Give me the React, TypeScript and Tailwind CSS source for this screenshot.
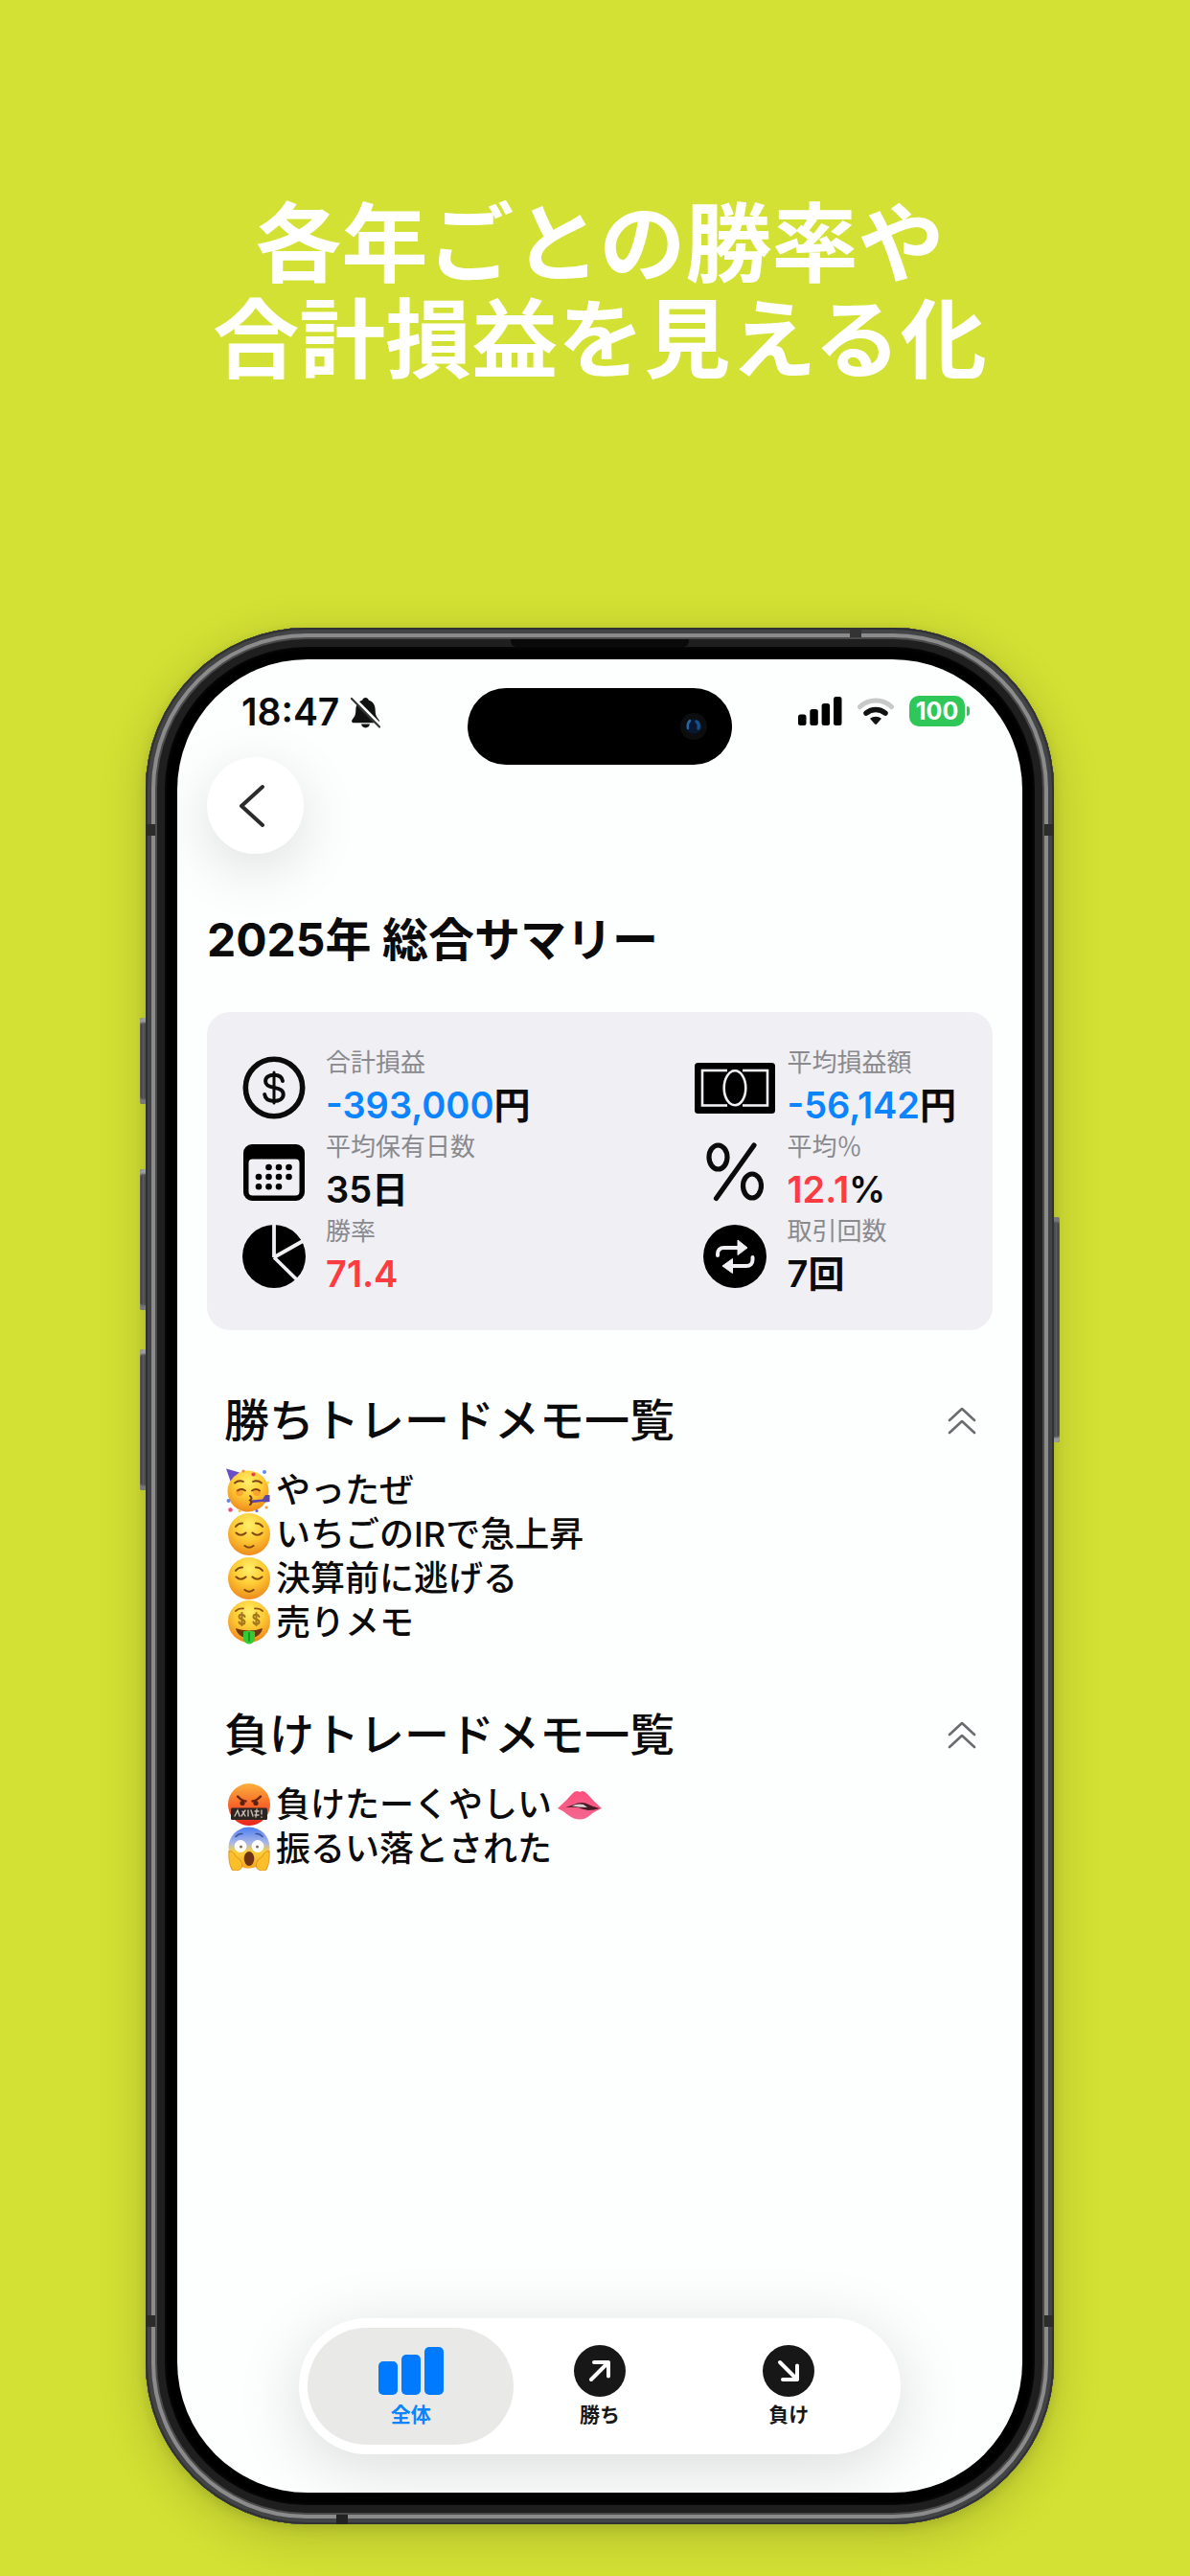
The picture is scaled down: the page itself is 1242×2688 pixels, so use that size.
import type { ReactNode } from "react";

function BellOff() {
  return (
    <svg width="31" height="33" viewBox="0 0 32 34" aria-label="消音" role="img">
      <path d="M16 1c1.700 0 3 1 3.300 2.500C24 5 26.500 9 26.500 14c0 6 1.500 8 4 11 .8 1.300.2 3-1.500 3H3c-1.700 0-2.300-1.700-1.500-3 2.500-3 4-5 4-11 0-5 2.500-9 7.200-10.500C13 2 14.300 1 16 1Z" fill="#111" />
      <path d="M11.500 29.500h9a4.500 4 0 0 1-9 0Z" fill="#111" />
      <path d="M2.500 1.500 32 31.500" stroke="#fdfefe" strokeWidth="4.600" />
      <path d="M1 2 31 32.500" stroke="#333" strokeWidth="2.200" strokeLinecap="round" />
    </svg>
  );
}

function Signal() {
  return (
    <svg width="46" height="30" viewBox="0 0 46 30" aria-label="電波強度" role="img">
      <rect x="0" y="18.500" width="8.500" height="11.500" rx="2.500" />
      <rect x="12.300" y="13" width="8.500" height="17" rx="2.500" />
      <rect x="24.600" y="7" width="8.500" height="23" rx="2.500" />
      <rect x="37" y="0" width="8.500" height="30" rx="2.500" />
    </svg>
  );
}

function Wifi() {
  return (
    <svg width="38" height="29" viewBox="0 0 38 29" fill="none" aria-label="Wi-Fi" role="img">
      <path d="M2.500 9.500a24 24 0 0 1 33 0" stroke="#c7c8c8" strokeWidth="5" strokeLinecap="round" />
      <path d="M9 16.200a15.500 15.500 0 0 1 20 0" stroke="#111" strokeWidth="5.500" strokeLinecap="round" />
      <path d="M13 21.800a9.500 9.500 0 0 1 12 0l-5 5.700a1.500 1.500 0 0 1-2 0Z" fill="#111" />
    </svg>
  );
}

function DollarIcon() {
  return (
    <svg width="66" height="66" viewBox="0 0 66 66" fill="none" stroke="#0b0b0b">
      <circle cx="33" cy="33" r="29.700" strokeWidth="5.600" />
      <path d="M42 26c-.6-4.300-4-6.300-9-6.300-5.200 0-8.900 2.600-8.900 6.500 0 3.900 2.800 5.400 8.900 6.700 6.600 1.400 9.700 3 9.700 7.200s-3.900 6.900-9.700 6.900c-5.500 0-9.200-2.500-9.800-6.900" strokeWidth="4" strokeLinecap="round" />
      <path d="M33 17v32" strokeWidth="3" strokeLinecap="round" />
    </svg>
  );
}

const CALENDAR_DOTS = [
  [26.500, 24], [37, 24], [47.500, 24],
  [16, 34], [26.500, 34], [37, 34], [47.500, 34],
  [16, 44.300], [26.500, 44.300], [37, 44.300],
];

function CalendarIcon() {
  return (
    <svg width="64" height="59" viewBox="0 0 64 59">
      <path fillRule="evenodd" d="M9 0h46a9 9 0 0 1 9 9v41a9 9 0 0 1-9 9H9a9 9 0 0 1-9-9V9a9 9 0 0 1 9-9ZM9.500 15.500a4 4 0 0 0-4 4V49.500a4 4 0 0 0 4 4h45a4 4 0 0 0 4-4v-30a4 4 0 0 0-4-4Z" />
      {CALENDAR_DOTS.map(([x, y]) => (
        <circle key={`${x}-${y}`} cx={x} cy={y} r="3.300" />
      ))}
    </svg>
  );
}

function PieIcon() {
  return (
    <svg width="66" height="66" viewBox="0 0 66 66">
      <circle cx="33" cy="33" r="33" />
      <path d="M33 -2v36M33 34 63 17M33 34 58 58.500" stroke="#efeff4" strokeWidth="3.800" fill="none" />
    </svg>
  );
}

function BanknoteIcon() {
  return (
    <svg width="84" height="53" viewBox="0 0 84 53">
      <rect width="84" height="53" rx="3.500" />
      <rect x="8" y="8" width="68" height="36.500" fill="none" stroke="#efeff4" strokeWidth="2.600" />
      <rect x="34" y="5" width="16" height="42" />
      <ellipse cx="42" cy="26.300" rx="11.300" ry="18" fill="#000" stroke="#efeff4" strokeWidth="2.600" />
    </svg>
  );
}

function PercentIcon() {
  return (
    <svg width="60" height="62" viewBox="0 0 60 62" fill="none" stroke="#0b0b0b" strokeWidth="5.200">
      <ellipse cx="12.500" cy="15.500" rx="9.500" ry="12.500" />
      <ellipse cx="48" cy="45.500" rx="9.500" ry="12.500" />
      <path d="M50 3 10.500 58.500" strokeLinecap="round" />
    </svg>
  );
}

function RepeatIcon() {
  return (
    <svg width="66" height="66" viewBox="0 0 66 66">
      <circle cx="33" cy="33" r="33" />
      <g stroke="#efeff4" strokeWidth="4" fill="none" strokeLinecap="round">
        <path d="M15 32v-1.500c0-4 2.500-6.500 6.500-6.500h15" />
        <path d="M51.500 34v2.500c0 4-2.500 6.500-6.500 6.500h-15" />
      </g>
      <path d="M36 16 46 24 36 31.500ZM30.500 35.500 20 43 30.500 50.500Z" fill="#efeff4" stroke="#efeff4" strokeLinejoin="round" />
    </svg>
  );
}

type StatProps = { icon: ReactNode; label: string; value: string; tone: string; unit?: string };

function Stat({ icon, label, value, tone, unit }: StatProps) {
  return (
    <div className="flex h-[88px] items-center gap-3">
      <div className="flex w-[84px] shrink-0 justify-center" aria-hidden="true">{icon}</div>
      <dl>
        <dt className="text-[26px] leading-9 text-[#8a8a8e]">{label}</dt>
        <dd className="text-[38px] leading-[52px] font-semibold text-[#0b0b0b]">
          <span className={tone}>{value}</span>
          {unit}
        </dd>
      </dl>
    </div>
  );
}

function EmojiDefs() {
  return (
    <svg width="0" height="0" className="absolute" aria-hidden="true">
      <defs>
        <radialGradient id="face" cx="50%" cy="28%" r="72%">
          <stop offset="0" stopColor="#fff06a" />
          <stop offset=".5" stopColor="#fdcb35" />
          <stop offset="1" stopColor="#ee8a1c" />
        </radialGradient>
        <linearGradient id="rage" x1="0" y1="0" x2="0" y2="1">
          <stop offset="0" stopColor="#fbb13c" />
          <stop offset=".5" stopColor="#f8682a" />
          <stop offset="1" stopColor="#e8231c" />
        </linearGradient>
        <linearGradient id="scared" x1="0" y1="0" x2="0" y2="1">
          <stop offset="0" stopColor="#4c7df0" />
          <stop offset=".38" stopColor="#a9b6e8" />
          <stop offset=".6" stopColor="#fbd03a" />
          <stop offset="1" stopColor="#f5a423" />
        </linearGradient>
        <linearGradient id="lip" x1="0" y1="0" x2="0" y2="1">
          <stop offset="0" stopColor="#ff4f7d" />
          <stop offset="1" stopColor="#f2688f" />
        </linearGradient>
      </defs>
    </svg>
  );
}

function Emoji({ label, children }: { label: string; children: ReactNode }) {
  return (
    <svg width="46" height="46" viewBox="0 0 46 46" fill="none" strokeLinecap="round" className="shrink-0" role="img" aria-label={label}>
      {children}
    </svg>
  );
}

const Party = () => (
  <Emoji label="パーティー">
    <circle cx="23" cy="24" r="21.500" fill="url(#face)" />
    <circle cx="14" cy="25" r="4" fill="#f4702a" opacity=".45" />
    <circle cx="32" cy="25" r="4" fill="#f4702a" opacity=".45" />
    <path d="M0 .5 14 4.500Q8 8 4.500 13.500Z" fill="#6a4fc4" />
    <path d="M9 15.500q4-3.500 9-1.500M28 14q5-2 9 1.500M12 23.500q4-3 8 0M27 23.500q4-3 8 0" stroke="#7a4312" strokeWidth="1.800" />
    <path d="M25 33.500 38 32.500l3-4.500h4.500v7l-4.500.5-3.500-.5-12.500 1.500Z" fill="#5c46a8" />
    <path d="M25 29q3 2 0 4.500 3 2 0 4.500" stroke="#6a3812" strokeWidth="2" />
    <circle cx="28.500" cy="6.500" r="2.100" fill="#ee3b5b" />
    <circle cx="18" cy="3" r="1.600" fill="#f08a3c" />
    <circle cx="40" cy="4" r="2" fill="#5d8cf0" />
    <circle cx="43.500" cy="15" r="1.600" fill="#f7d940" />
    <circle cx="2.500" cy="34" r="2" fill="#5d8cf0" />
    <circle cx="4.500" cy="43.500" r="2.200" fill="#ee4b7b" />
    <circle cx="14" cy="44.500" r="1.500" fill="#f7c840" />
    <circle cx="32" cy="44.500" r="1.500" fill="#5d6cd0" />
    <circle cx="42" cy="41" r="1.600" fill="#f0a03c" />
  </Emoji>
);

const Relieved = () => (
  <Emoji label="ほっとした顔">
    <circle cx="24" cy="23" r="22" fill="url(#face)" />
    <path d="M10 15q2.500-3.500 7-3.500M38 15q-2.500-3.500-7-3.500M10.500 21.500q4.500 4.500 10 0M27.500 21.500q5 4.500 10 0M19.500 35q4.500 3.500 9 0" stroke="#80480f" strokeWidth="2.100" />
  </Emoji>
);

const Money = () => (
  <Emoji label="お金の顔">
    <g transform="translate(1 0)">
      <circle cx="23" cy="22" r="22" fill="url(#face)" />
      <path d="M9 11q3-3 8-2.500M29 8.500q5-.5 8 2.500" stroke="#94570f" strokeWidth="1.800" />
      <path d="M18.500 17c-1-3-6-3-6 0 0 3.500 6 2 6 5.500 0 3-5.500 3-6 0M15.500 13v13M33.500 17c-1-3-6-3-6 0 0 3.500 6 2 6 5.500 0 3-5.500 3-6 0M30.500 13v13" stroke="#a2761c" strokeWidth="2" />
      <path d="M9 29q14 5 28 0-1 6-7 9H16q-6-3-7-9Z" fill="#70370f" />
      <path d="M17 32.500q6-1.500 12 0V41q-2.500 4.500-6 4.500T17 41Z" fill="#35c934" />
      <path d="M23 34v8" stroke="#189a22" strokeWidth="2" />
    </g>
  </Emoji>
);

const Cursing = () => (
  <Emoji label="怒り">
    <g transform="translate(1 0)">
      <circle cx="23" cy="23" r="22" fill="url(#rage)" />
      <path d="M11 14.500q4 4.500 8.500 5M35 14.500q-4 4.500-8.500 5" stroke="#6b2410" strokeWidth="2.300" />
      <circle cx="16" cy="21.500" r="2.600" fill="#5c200f" />
      <circle cx="30" cy="21.500" r="2.600" fill="#5c200f" />
      <rect x="4" y="26.500" width="38" height="12.500" rx="1.500" fill="#2c2522" />
      <path d="m8 35 3-6 2 6M16 30l3 5M15 35l4-6M22 29v6M25 29l2 6M29 30h4M29 34h4M31 28l-1 8M36 29v4M36 36v.2" stroke="#c8bdb6" strokeWidth="1.400" />
    </g>
  </Emoji>
);

const Scream = () => (
  <Emoji label="叫び">
    <g transform="translate(1 0)">
      <circle cx="23" cy="22" r="21.500" fill="url(#scared)" />
      <circle cx="14" cy="20.500" r="6.400" fill="#fff" />
      <circle cx="32" cy="20.500" r="6.400" fill="#fff" />
      <circle cx="14.500" cy="21" r="1.500" fill="#8a6a4c" />
      <circle cx="31.500" cy="21" r="1.500" fill="#8a6a4c" />
      <path d="M9 10.500q3-3.500 7-3M37 10.500q-3-3.500-7-3" stroke="#3d539e" strokeWidth="1.600" />
      <ellipse cx="23" cy="33.500" rx="5.300" ry="7.500" fill="#6e3311" />
      <path d="M2 26q4-2 7 5l5 4q3 5 1 8.500-5 4.500-10 1.500-4-8-3-19ZM44 26q-4-2-7 5l-5 4q-3 5-1 8.500 5 4.500 10 1.500 4-8 3-19Z" fill="#fbbf2c" stroke="#d98a18" strokeWidth=".8" />
    </g>
  </Emoji>
);

const Lips = () => (
  <Emoji label="唇">
    <path d="M0 27Q9 19 15 12q4-5 8-2 4-3 8 2 6 7 15 15-9 4-12 7-5 4.500-11 4.500T11 34Q7 30 0 27Z" fill="url(#lip)" />
    <path d="M2 27q8-1 15-4 6-3 12-1.500 8 4 15 5.500-6 2-12 2-6-1-11-3-8-1-19 1Z" fill="#4a1a26" />
    <path d="M15 24.500q6-3 12-1.500l4 3q-8 0-16-1.500Z" fill="#d9cfd0" />
  </Emoji>
);

type Memo = { icon: ReactNode; text: string; tail?: ReactNode };

function MemoSection({ title, items }: { title: string; items: Memo[] }) {
  return (
    <section className="pr-3 pl-[18px]">
      <div className="flex items-center justify-between">
        <h2 className="text-[47px] leading-[68px] font-medium">{title}</h2>
        <button type="button" aria-label={`${title}を閉じる`} className="flex size-10 items-center justify-center">
          <svg width="30" height="30" viewBox="0 0 30 30" fill="none" stroke="#6c6c70" strokeWidth="2.600" strokeLinecap="round" strokeLinejoin="round">
            <path d="M2 15 15 3 28 15M2 28 15 16 28 28" />
          </svg>
        </button>
      </div>
      <ul className="mt-4">
        {items.map((m) => (
          <li key={m.text} className="flex h-[46px] items-center gap-[6px] pl-[2px] text-[36px] leading-[46px] font-medium whitespace-nowrap">
            {m.icon}
            <span>{m.text}</span>
            {m.tail}
          </li>
        ))}
      </ul>
    </section>
  );
}

function CircleArrow({ down }: { down?: boolean }) {
  return (
    <svg width="54" height="54" viewBox="0 0 54 54" fill="none">
      <circle cx="27" cy="27" r="27" fill="#171717" />
      <path
        d={down ? "M18 18 36 36M36 21.500V36H21" : "M18 36 36 18M21 18H36V32.500"}
        stroke="#fff"
        strokeWidth="4"
        strokeLinecap="round"
        strokeLinejoin="round"
      />
    </svg>
  );
}

function BarsIcon() {
  return (
    <svg width="68" height="50" viewBox="0 0 68 50" fill="#007aff">
      <rect x="0" y="15" width="20" height="35" rx="5" />
      <rect x="24" y="8" width="20" height="42" rx="5" />
      <rect x="48" y="0" width="20" height="50" rx="5" />
    </svg>
  );
}

function Tab({ icon, label, selected }: { icon: ReactNode; label: string; selected?: boolean }) {
  return (
    <button
      type="button"
      aria-pressed={!!selected}
      className={
        selected
          ? "-mx-[9px] flex h-[122px] flex-1 flex-col items-center rounded-full bg-[#e9e9e8] pt-[18px] text-[#0a84ff]"
          : "-mx-[9px] flex h-[122px] flex-1 flex-col items-center rounded-full pt-[18px] text-[#171717]"
      }
    >
      <span className="flex h-[54px] items-center">{icon}</span>
      <span className="mt-1 text-[21px] leading-[30px] font-bold">{label}</span>
    </button>
  );
}

const SIDE_BUTTON = "absolute w-[7px] rounded-l-[3px] bg-linear-to-r from-[#2c2d2f] via-[#5a5b5e] to-[#38393b] shadow-[inset_0_5px_2px_#9a9b9d,inset_0_-5px_2px_#77787a]";

const wins: Memo[] = [
  { icon: <Party />, text: "やったぜ" },
  { icon: <Relieved />, text: "いちごのIRで急上昇" },
  { icon: <Relieved />, text: "決算前に逃げる" },
  { icon: <Money />, text: "売りメモ" },
];

const losses: Memo[] = [
  { icon: <Cursing />, text: "負けたーくやしい", tail: <Lips /> },
  { icon: <Scream />, text: "振るい落とされた" },
];

export default function App() {
  return (
    <main lang="ja" className="flex min-h-screen flex-col items-center bg-[#d3e134] pt-[205px] pr-[142px] pb-[54px] pl-[152px] font-['Inter','Noto_Sans_CJK_JP',sans-serif] text-[#0b0b0b]">
      <EmojiDefs />
      <h1 className="text-center text-[90px] leading-[100px] font-bold text-white">
        各年ごとの勝率や
        <br />
        合計損益を見える化
      </h1>

      <div className="relative mt-[250px] flex w-full max-w-[948px] flex-1 flex-col rounded-[168px] bg-black p-[33px] shadow-[0_12px_50px_#0000002e,0_3px_12px_#0000001f]">
        <span className={`${SIDE_BUTTON} top-[407px] -left-[6px] h-[90px]`} />
        <span className={`${SIDE_BUTTON} top-[565px] -left-[6px] h-[147px]`} />
        <span className={`${SIDE_BUTTON} top-[753px] -left-[6px] h-[147px]`} />
        <span className={`${SIDE_BUTTON} top-[615px] -right-[6px] h-[235px] rotate-180`} />
        <div className="pointer-events-none absolute inset-0 rounded-[168px] shadow-[inset_0_0_0_2px_#303133,inset_0_0_0_6px_#434446,inset_0_0_0_10px_#8b8b8c,inset_0_0_0_12px_#4a4a4a,inset_0_0_0_20px_#1f1f1f,inset_0_0_4px_21px_#0c0c0c]">
          <span className="absolute top-[205px] left-0 h-3 w-[10px] bg-[#2c2c2c]" />
          <span className="absolute top-[205px] right-0 h-3 w-[10px] bg-[#2c2c2c]" />
          <span className="absolute bottom-[206px] left-0 h-3 w-[10px] bg-[#2c2c2c]" />
          <span className="absolute right-0 bottom-[206px] h-3 w-[10px] bg-[#2c2c2c]" />
          <span className="absolute top-0 right-[201px] h-[10px] w-3 bg-[#333]" />
          <span className="absolute bottom-0 left-[199px] h-[10px] w-3 bg-[#222]" />
          <span className="absolute top-3 left-1/2 h-2 w-[186px] -translate-x-1/2 rounded-b-[6px] bg-[#0a0a0a]" />
        </div>

        <div className="relative flex flex-1 flex-col overflow-hidden rounded-[136px] bg-[#fdfefe]">
          <header className="flex h-[110px] items-start justify-between pr-[55px] pl-[67px]">
            <div className="flex items-center gap-3 pt-[31px]">
              <time className="text-[39px] leading-[48px] font-semibold">18:47</time>
              <BellOff />
            </div>
            <div className="absolute top-[30px] left-1/2 flex h-20 w-[276px] -translate-x-1/2 items-center justify-end rounded-full bg-black pr-[26px]">
              <span className="flex size-7 items-center justify-center rounded-full bg-[#0c0d0f]">
                <svg width="18" height="16" viewBox="0 0 18 16">
                  <ellipse cx="9" cy="8" rx="8.500" ry="7.500" fill="#0a1730" />
                  <path d="M5 2Q2 5 3 10" stroke="#24679f" strokeWidth="2.500" fill="none" strokeLinecap="round" />
                  <path d="M12 3q3 2 2 7" stroke="#15508a" strokeWidth="3.500" fill="none" strokeLinecap="round" />
                </svg>
              </span>
            </div>
            <div className="flex items-center pt-[38px]">
              <Signal />
              <span className="ml-4 flex"><Wifi /></span>
              <span className="ml-4 flex h-8 w-[58px] items-center justify-center rounded-[10px] bg-[#30c759] text-[25px] leading-8 font-bold text-white">100</span>
              <span className="ml-[2px] h-[10px] w-[3px] rounded-r-full bg-[#30c759]" />
            </div>
          </header>

          <div className="flex flex-1 flex-col px-[31px]">
            <button type="button" aria-label="戻る" className="mt-[-8px] flex size-[101px] items-center justify-center rounded-full bg-white shadow-[0_16px_60px_#00000020]">
              <svg width="28" height="46" viewBox="0 0 28 46" fill="none" stroke="#2b2b2b" strokeWidth="4" strokeLinecap="round" strokeLinejoin="round" className="mr-2">
                <path d="M25 3 3 23 25 43" />
              </svg>
            </button>

            <h2 className="mt-14 text-[48px] leading-[68px] font-bold">2025年 総合サマリー</h2>

            <div className="mt-[41px] flex justify-between rounded-[24px] bg-[#efeff4] pt-[35px] pr-[38px] pb-[33px] pl-7">
              <div>
                <Stat icon={<DollarIcon />} label="合計損益" value="-393,000" tone="text-[#0a84ff]" unit="円" />
                <Stat icon={<CalendarIcon />} label="平均保有日数" value="35" tone="" unit="日" />
                <Stat icon={<PieIcon />} label="勝率" value="71.4" tone="text-[#ff3b42]" />
              </div>
              <div>
                <Stat icon={<BanknoteIcon />} label="平均損益額" value="-56,142" tone="text-[#0a84ff]" unit="円" />
                <Stat icon={<PercentIcon />} label="平均％" value="12.1" tone="text-[#ff3b42]" unit="%" />
                <Stat icon={<RepeatIcon />} label="取引回数" value="7" tone="" unit="回" />
              </div>
            </div>

            <div className="mt-[60px] flex flex-col gap-[60px]">
              <MemoSection title="勝ちトレードメモ一覧" items={wins} />
              <MemoSection title="負けトレードメモ一覧" items={losses} />
            </div>

            <nav aria-label="集計の切り替え" className="mx-auto mt-auto mb-10 flex h-[142px] w-full max-w-[628px] items-center rounded-full bg-white px-[18px] shadow-[0_14px_70px_#00000024]">
              <Tab icon={<BarsIcon />} label="全体" selected />
              <Tab icon={<CircleArrow />} label="勝ち" />
              <Tab icon={<CircleArrow down />} label="負け" />
            </nav>
          </div>
        </div>
      </div>
    </main>
  );
}
